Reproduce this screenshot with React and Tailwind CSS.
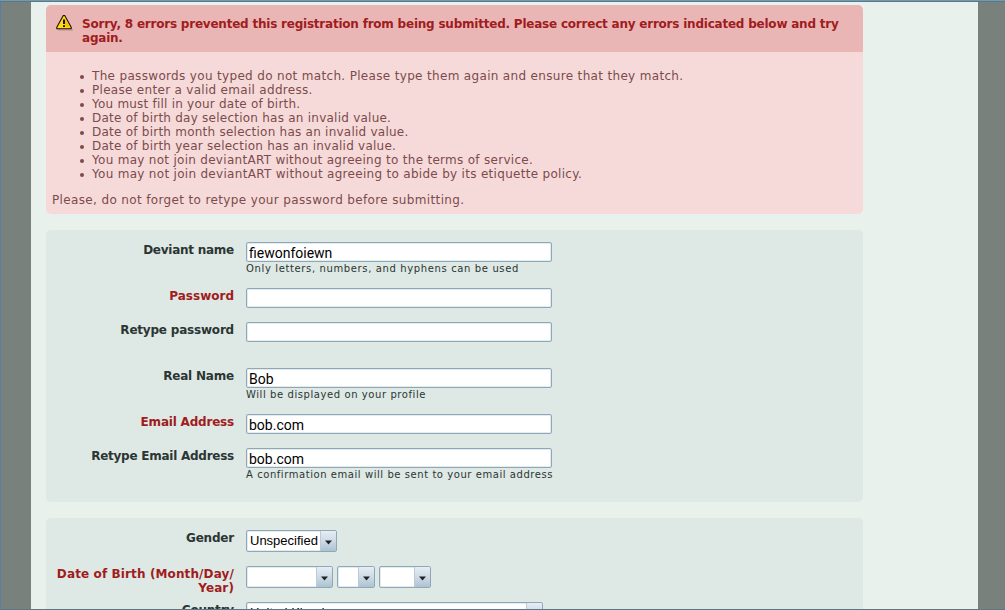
import React from 'react';

const errors = [
  ['The passwords you typed do not match. Please type them again and ensure that they match.', 'tracking-[0.33px]'],
  ['Please enter a valid email address.', 'tracking-[0.3px]'],
  ['You must fill in your date of birth.', 'tracking-[0.22px]'],
  ['Date of birth day selection has an invalid value.', 'tracking-[0.24px]'],
  ['Date of birth month selection has an invalid value.', 'tracking-[0.24px]'],
  ['Date of birth year selection has an invalid value.', 'tracking-[0.24px]'],
  ['You may not join deviantART without agreeing to the terms of service.', 'tracking-[0.29px]'],
  ['You may not join deviantART without agreeing to abide by its etiquette policy.', 'tracking-[0.3px]'],
];

function WarningIcon() {
  return (
    <svg className="mt-[9px] h-[17px] w-[18px] shrink-0" viewBox="0 0 18 17">
      <path d="M2 15.5h15v1H2z" fill="#b98f8f" />
      <path d="M7.3 1.5.8 13.2v1.6h14.4v-1.6L8.7 1.5z" fill="#ffd91a" stroke="#171204" strokeWidth="1.1" strokeLinejoin="round" />
      <path d="M9 4v8l5 2z" fill="#f7c000" />
      <path d="M7 5.5h2v4.5H7zM7 11.2h2v1.8H7z" fill="#171204" />
    </svg>
  );
}

function Label({ children, error, tracking = 'tracking-[-0.2px]' }) {
  return (
    <div className={`w-[188px] shrink-0 pt-px text-right text-[12px] leading-[14px] font-bold whitespace-nowrap ${error ? 'text-[#a01c20]' : 'text-[#2b3634]'} ${tracking}`}>
      {children}
    </div>
  );
}

function Field({ label, value = '', hint, error, height, tracking, hintTracking = '' }) {
  return (
    <div className={`flex gap-3 ${height}`}>
      <Label error={error} tracking={tracking}>{label}</Label>
      <div>
        <input
          readOnly
          value={value}
          className="block h-5 w-[306px] rounded-[2px] border border-[#8ea8b6] bg-white pt-px pl-[2px] font-['Roboto',sans-serif] text-[14px] leading-4 text-black shadow-[inset_0_0_0_1px_#e3ebf1] outline-none"
        />
        {hint && <div className={`text-[10px] leading-[13px] whitespace-nowrap text-[#2b3634] ${hintTracking}`}>{hint}</div>}
      </div>
    </div>
  );
}

function SelectBox({ width, value }) {
  return (
    <div className={`flex h-[22px] shrink-0 overflow-hidden rounded-[2px] border border-[#8ea8b6] bg-white shadow-[inset_0_0_0_1px_#e3ebf1] ${width}`}>
      <div className="min-w-0 flex-1 overflow-hidden pl-[3px] font-['Liberation_Sans',sans-serif] text-[13px] leading-[20px] whitespace-nowrap text-black">{value}</div>
      <div className="flex w-4 items-center justify-center border-l border-[#bccbd6] bg-linear-to-b from-[#e6edf5] via-[#cddae5] to-[#abc3d1]">
        <svg className="mt-[2px] h-[5px] w-[7px]" viewBox="0 0 7 5"><path d="M0 .5h7L3.5 4.5z" fill="#1f2428" /></svg>
      </div>
    </div>
  );
}

export default function App() {
  return (
    <div className="flex h-[610px] w-[1005px] flex-col overflow-hidden bg-[#78817b] font-['DejaVu_Sans',sans-serif]">
      <div className="h-[2px] shrink-0 border-b border-[#5b7885] bg-[#7499b3]" />
      <div className="min-h-0 flex-1 overflow-hidden border-b border-l border-b-[#5b7885] border-l-[#5580a3] pr-[27px] pl-[30px]">
        <main className="h-full bg-[#e8f1ec] pt-[3px] pl-[15px]">
          <section className="h-[209px] w-[817px] overflow-hidden rounded-[5px] bg-[#f6dada] text-[12px] leading-[14px] text-[#7c4b4b]">
            <header className="flex h-[47px] bg-[#e9b6b5] pl-[10px] font-bold text-[#a01c20]">
              <WarningIcon />
              <div className="ml-2 pt-3 tracking-[-0.22px] whitespace-nowrap">
                <div>Sorry, 8 errors prevented this registration from being submitted. Please correct any errors indicated below and try</div>
                <div>again.</div>
              </div>
            </header>
            <ul className="pt-[17px]">
              {errors.map(([text, tracking]) => (
                <li key={text} className={`flex h-[14px] items-center whitespace-nowrap ${tracking}`}>
                  <span className="mt-[2px] mr-2 ml-[34px] size-1 rounded-full bg-[#7c4b4b]" />
                  {text}
                </li>
              ))}
            </ul>
            <p className="mt-3 ml-[6px] tracking-[0.36px] whitespace-nowrap">Please, do not forget to retype your password before submitting.</p>
          </section>

          <section className="mt-4 h-[272px] w-[817px] rounded-[5px] bg-[#dee8e4] pt-3">
            <Field label="Deviant name" value="fiewonfoiewn" hint="Only letters, numbers, and hyphens can be used" height="h-[46px]" tracking="tracking-[-0.25px]" hintTracking="tracking-[0.63px]" />
            <Field label="Password" error height="h-[34px]" tracking="tracking-normal" />
            <Field label="Retype password" height="h-[46px]" />
            <Field label="Real Name" value="Bob" hint="Will be displayed on your profile" height="h-[46px]" hintTracking="tracking-[0.58px]" />
            <Field label="Email Address" value="bob.com" error height="h-[34px]" />
            <Field label="Retype Email Address" value="bob.com" hint="A confirmation email will be sent to your email address" height="h-[46px]" tracking="tracking-[-0.25px]" hintTracking="tracking-[0.56px]" />
          </section>

          <section className="mt-4 h-[120px] w-[817px] rounded-[5px] bg-[#dee8e4] pt-3">
            <div className="flex h-9 gap-3">
              <Label>Gender</Label>
              <SelectBox width="w-[91px]" value="Unspecified" />
            </div>
            <div className="flex h-9 gap-3">
              <Label error tracking="tracking-[0.12px]">Date of Birth (Month/Day/<br />Year)</Label>
              <div className="flex gap-1">
                <SelectBox width="w-[87px]" />
                <SelectBox width="w-[38px]" />
                <SelectBox width="w-[52px]" />
              </div>
            </div>
            <div className="flex h-9 gap-3">
              <Label>Country</Label>
              <SelectBox width="w-[297px]" value="United Kingdom" />
            </div>
          </section>
        </main>
      </div>
    </div>
  );
}
